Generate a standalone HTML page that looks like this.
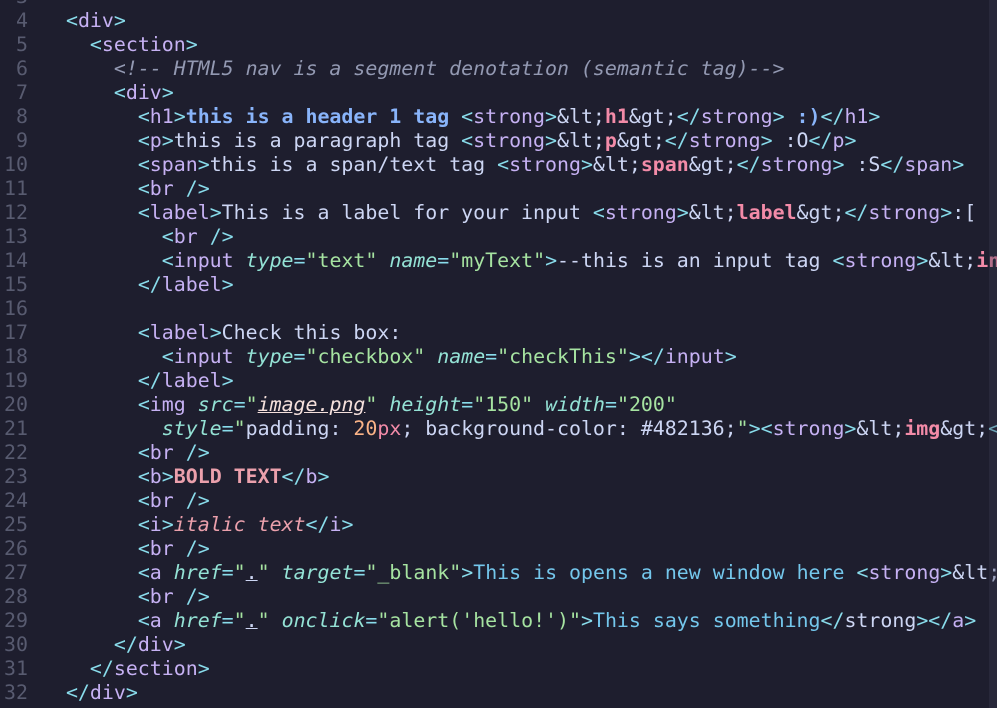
<!DOCTYPE html>
<html><head><meta charset="utf-8"><style>
html,body{margin:0;padding:0;background:#1e1e2e;width:997px;height:708px;overflow:hidden}
#c{position:absolute;top:-15px;left:0;width:997px;overflow:hidden;font-family:"DejaVu Sans Mono","Liberation Mono",monospace;font-size:19.9px;color:#cdd6f4}
.l{height:24px;line-height:24px;white-space:pre;position:relative}
.n{display:inline-block;width:28px;text-align:right;color:#585b70;margin-right:14px}
.p{color:#89dceb}.t{color:#c6b1f3}.a{color:#94e2d5;font-style:italic}.s{color:#a6e3a1}
.c{color:#9399b2;font-style:italic}.h{color:#89b4fa;font-weight:bold}.r{color:#f38ba8;font-weight:bold}
.bb{color:#eba0ac;font-weight:bold}.i{color:#eba0ac;font-style:italic}.k{color:#74c7ec}.nu{color:#fab387}.u{text-decoration:underline}
#sb{position:absolute;right:0;top:0;width:8px;height:708px;background:rgba(60,60,80,0.35)}
</style></head><body>
<div id="c">
<div class="l"><span class="n">3</span></div>
<div class="l"><span class="n">4</span>  <span class="p">&lt;</span><span class="t">div</span><span class="p">&gt;</span></div>
<div class="l"><span class="n">5</span>    <span class="p">&lt;</span><span class="t">section</span><span class="p">&gt;</span></div>
<div class="l"><span class="n">6</span>      <span class="c">&lt;!-- HTML5 nav is a segment denotation (semantic tag)--&gt;</span></div>
<div class="l"><span class="n">7</span>      <span class="p">&lt;</span><span class="t">div</span><span class="p">&gt;</span></div>
<div class="l"><span class="n">8</span>        <span class="p">&lt;</span><span class="t">h1</span><span class="p">&gt;</span><span class="h">this is a header 1 tag </span><span class="p">&lt;</span><span class="t">strong</span><span class="p">&gt;</span>&amp;lt;<span class="r">h1</span>&amp;gt;<span class="p">&lt;/</span><span class="t">strong</span><span class="p">&gt;</span><span class="h"> :)</span><span class="p">&lt;/</span><span class="t">h1</span><span class="p">&gt;</span></div>
<div class="l"><span class="n">9</span>        <span class="p">&lt;</span><span class="t">p</span><span class="p">&gt;</span>this is a paragraph tag <span class="p">&lt;</span><span class="t">strong</span><span class="p">&gt;</span>&amp;lt;<span class="r">p</span>&amp;gt;<span class="p">&lt;/</span><span class="t">strong</span><span class="p">&gt;</span> :O<span class="p">&lt;/</span><span class="t">p</span><span class="p">&gt;</span></div>
<div class="l"><span class="n">10</span>        <span class="p">&lt;</span><span class="t">span</span><span class="p">&gt;</span>this is a span/text tag <span class="p">&lt;</span><span class="t">strong</span><span class="p">&gt;</span>&amp;lt;<span class="r">span</span>&amp;gt;<span class="p">&lt;/</span><span class="t">strong</span><span class="p">&gt;</span> :S<span class="p">&lt;/</span><span class="t">span</span><span class="p">&gt;</span></div>
<div class="l"><span class="n">11</span>        <span class="p">&lt;</span><span class="t">br</span> <span class="p">/&gt;</span></div>
<div class="l"><span class="n">12</span>        <span class="p">&lt;</span><span class="t">label</span><span class="p">&gt;</span>This is a label for your input <span class="p">&lt;</span><span class="t">strong</span><span class="p">&gt;</span>&amp;lt;<span class="r">label</span>&amp;gt;<span class="p">&lt;/</span><span class="t">strong</span><span class="p">&gt;</span>:[</div>
<div class="l"><span class="n">13</span>          <span class="p">&lt;</span><span class="t">br</span> <span class="p">/&gt;</span></div>
<div class="l"><span class="n">14</span>          <span class="p">&lt;</span><span class="t">input</span> <span class="a">type</span><span class="p">=</span><span class="s">"text"</span> <span class="a">name</span><span class="p">=</span><span class="s">"myText"</span><span class="p">&gt;</span>--this is an input tag <span class="p">&lt;</span><span class="t">strong</span><span class="p">&gt;</span>&amp;lt;<span class="r">input</span></div>
<div class="l"><span class="n">15</span>        <span class="p">&lt;/</span><span class="t">label</span><span class="p">&gt;</span></div>
<div class="l"><span class="n">16</span></div>
<div class="l"><span class="n">17</span>        <span class="p">&lt;</span><span class="t">label</span><span class="p">&gt;</span>Check this box:</div>
<div class="l"><span class="n">18</span>          <span class="p">&lt;</span><span class="t">input</span> <span class="a">type</span><span class="p">=</span><span class="s">"checkbox"</span> <span class="a">name</span><span class="p">=</span><span class="s">"checkThis"</span><span class="p">&gt;&lt;/</span><span class="t">input</span><span class="p">&gt;</span></div>
<div class="l"><span class="n">19</span>        <span class="p">&lt;/</span><span class="t">label</span><span class="p">&gt;</span></div>
<div class="l"><span class="n">20</span>        <span class="p">&lt;</span><span class="t">img</span> <span class="a">src</span><span class="p">=</span><span class="s">"</span><span class="i u" style="color:#f5e0dc">image.png</span><span class="s">"</span> <span class="a">height</span><span class="p">=</span><span class="s">"150"</span> <span class="a">width</span><span class="p">=</span><span class="s">"200"</span></div>
<div class="l"><span class="n">21</span>          <span class="a">style</span><span class="p">=</span><span class="s">"</span>padding: <span class="nu">20</span><span class="r" style="font-weight:normal">px</span>; background-color: #482136;<span class="s">"</span><span class="p">&gt;&lt;</span><span class="t">strong</span><span class="p">&gt;</span>&amp;lt;<span class="r">img</span>&amp;gt;<span class="p">&lt;/</span></div>
<div class="l"><span class="n">22</span>        <span class="p">&lt;</span><span class="t">br</span> <span class="p">/&gt;</span></div>
<div class="l"><span class="n">23</span>        <span class="p">&lt;</span><span class="t">b</span><span class="p">&gt;</span><span class="bb">BOLD TEXT</span><span class="p">&lt;/</span><span class="t">b</span><span class="p">&gt;</span></div>
<div class="l"><span class="n">24</span>        <span class="p">&lt;</span><span class="t">br</span> <span class="p">/&gt;</span></div>
<div class="l"><span class="n">25</span>        <span class="p">&lt;</span><span class="t">i</span><span class="p">&gt;</span><span class="i">italic text</span><span class="p">&lt;/</span><span class="t">i</span><span class="p">&gt;</span></div>
<div class="l"><span class="n">26</span>        <span class="p">&lt;</span><span class="t">br</span> <span class="p">/&gt;</span></div>
<div class="l"><span class="n">27</span>        <span class="p">&lt;</span><span class="t">a</span> <span class="a">href</span><span class="p">=</span><span class="s">"</span><span class="u">.</span><span class="s">"</span> <span class="a">target</span><span class="p">=</span><span class="s">"_blank"</span><span class="p">&gt;</span><span class="k">This is opens a new window here </span><span class="p">&lt;</span><span class="t">strong</span><span class="p">&gt;</span>&amp;lt;</div>
<div class="l"><span class="n">28</span>        <span class="p">&lt;</span><span class="t">br</span> <span class="p">/&gt;</span></div>
<div class="l"><span class="n">29</span>        <span class="p">&lt;</span><span class="t">a</span> <span class="a">href</span><span class="p">=</span><span class="s">"</span><span class="u">.</span><span class="s">"</span> <span class="a">onclick</span><span class="p">=</span><span class="s">"alert('hello!')"</span><span class="p">&gt;</span><span class="k">This says something</span><span class="p">&lt;/</span>strong<span class="p">&gt;&lt;/</span><span class="t">a</span><span class="p">&gt;</span></div>
<div class="l"><span class="n">30</span>      <span class="p">&lt;/</span><span class="t">div</span><span class="p">&gt;</span></div>
<div class="l"><span class="n">31</span>    <span class="p">&lt;/</span><span class="t">section</span><span class="p">&gt;</span></div>
<div class="l"><span class="n">32</span>  <span class="p">&lt;/</span><span class="t">div</span><span class="p">&gt;</span></div>
</div>
<div id="sb"></div>
</body></html>
